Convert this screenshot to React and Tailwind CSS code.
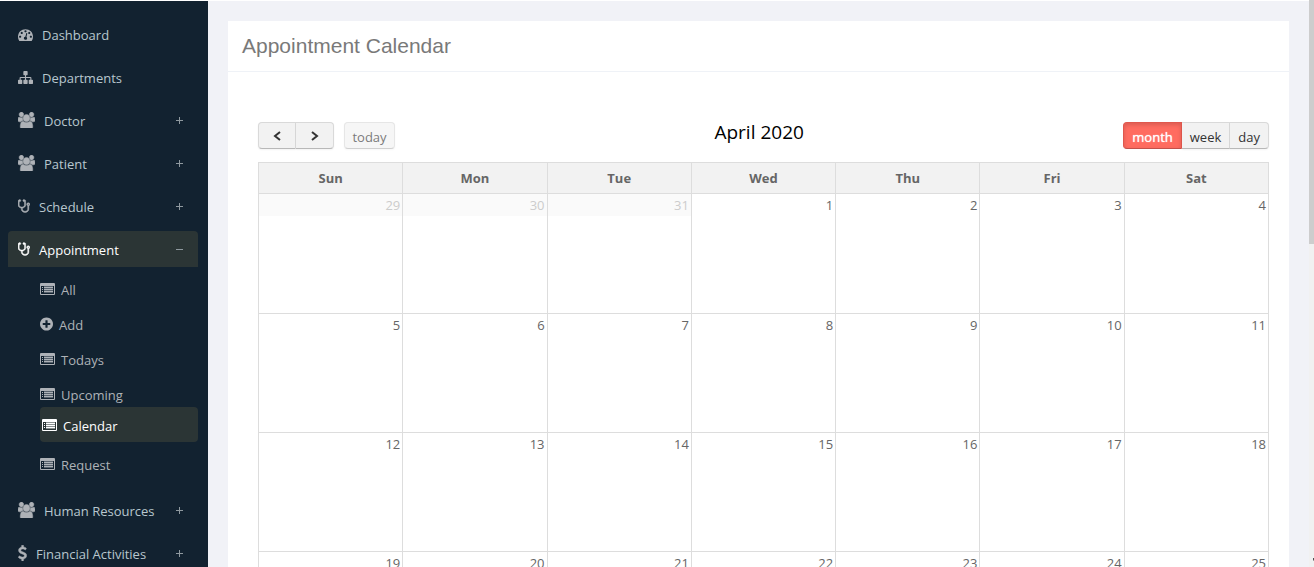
import React from 'react'

const icons = {
  dashboard: {
    viewBox: "0 0 1792 1792",
    size: "w-[15px] h-[15px]",
    path: "M384 1152q0-53-37.5-90.5t-90.5-37.5-90.5 37.5-37.5 90.5 37.5 90.5 90.5 37.5 90.5-37.5 37.5-90.5zm192-448q0-53-37.5-90.5t-90.5-37.5-90.5 37.5-37.5 90.5 37.5 90.5 90.5 37.5 90.5-37.5 37.5-90.5zm428 481l101-382q6-26-7.5-48.5t-38.5-29.5-48 6.5-30 39.5l-101 382q-60 5-107 43.5t-63 98.5q-20 77 20 146t117 89 146-20 89-117q16-60-6-117t-72-91zm660-33q0-53-37.5-90.5t-90.5-37.5-90.5 37.5-37.5 90.5 37.5 90.5 90.5 37.5 90.5-37.5 37.5-90.5zm-640-640q0-53-37.5-90.5t-90.5-37.5-90.5 37.5-37.5 90.5 37.5 90.5 90.5 37.5 90.5-37.5 37.5-90.5zm448 192q0-53-37.5-90.5t-90.5-37.5-90.5 37.5-37.5 90.5 37.5 90.5 90.5 37.5 90.5-37.5 37.5-90.5zm320 448q0 261-141 483-19 29-54 29h-1402q-35 0-54-29-141-221-141-483 0-182 71-348t191-286 286-191 348-71 348 71 286 191 191 286 71 348z",
  },
  sitemap: {
    viewBox: "0 0 1792 1792",
    size: "w-[15px] h-[15px]",
    path: "M1792 1248v320q0 40-28 68t-68 28h-320q-40 0-68-28t-28-68v-320q0-40 28-68t68-28h96v-192h-512v192h96q40 0 68 28t28 68v320q0 40-28 68t-68 28h-320q-40 0-68-28t-28-68v-320q0-40 28-68t68-28h96v-192h-512v192h96q40 0 68 28t28 68v320q0 40-28 68t-68 28h-320q-40 0-68-28t-28-68v-320q0-40 28-68t68-28h96v-192q0-52 38-90t90-38h512v-192h-96q-40 0-68-28t-28-68v-320q0-40 28-68t68-28h320q40 0 68 28t28 68v320q0 40-28 68t-68 28h-96v192h512q52 0 90 38t38 90v192h96q40 0 68 28t28 68z",
  },
  users: {
    viewBox: "0 0 1920 1664",
    size: "w-[17px] h-4",
    stroke: 50,
    path: "M593 896q-162 5-265 128h-134q-82 0-138-40.5t-56-118.5q0-353 124-353 6 0 43.5 21t97.5 42.5 119 21.5q67 0 133-23-5 37-5 66 0 139 81 256zm1071 637q0 120-73 189.5t-194 69.5h-874q-121 0-194-69.5t-73-189.5q0-53 3.5-103.5t14-109 26.5-108.5 43-97.5 62-81 85.5-53.5 111.5-20q10 0 43 21.5t73 48 107 48 135 21.5 135-21.5 107-48 73-48 43-21.5q61 0 111.5 20t85.5 53.5 62 81 43 97.5 26.5 108.5 14 109 3.5 103.5zm-1024-1277q0 106-75 181t-181 75-181-75-75-181 75-181 181-75 181 75 75 181zm704 384q0 159-112.5 271.5t-271.5 112.5-271.5-112.5-112.5-271.5 112.5-271.5 271.5-112.5 271.5 112.5 112.5 271.5zm576 225q0 78-56 118.5t-138 40.5h-134q-103-123-265-128 81-117 81-256 0-29-5-66 66 23 133 23 59 0 119-21.5t97.5-42.5 43.5-21q124 0 124 353zm-128-609q0 106-75 181t-181 75-181-75-75-181 75-181 181-75 181 75 75 181z",
  },
  stethoscope: {
    viewBox: "64 0 1408 1792",
    size: "w-3 h-[15px]",
    stroke: 60,
    path: "M1344 640q0-26-19-45t-45-19-45 19-19 45 19 45 45 19 45-19 19-45zm128 0q0 62-35.5 111t-92.5 70v395q0 159-131.5 271.5t-316.5 112.5-316.5-112.5-131.5-271.5v-132q-164-20-274-128t-110-252v-512q0-26 19-45t45-19q6 0 16 2 17-30 47-48t65-18q53 0 90.5 37.5t37.5 90.5-37.5 90.5-90.5 37.5q-33 0-64-18v402q0 106 94 181t226 75 226-75 94-181v-402q-31 18-64 18-53 0-90.5-37.5t-37.5-90.5 37.5-90.5 90.5-37.5q35 0 65 18t47 48q10-2 16-2 26 0 45 19t19 45v512q0 144-110 252t-274 128v132q0 106 94 181t226 75 226-75 94-181v-395q-57-21-92.5-70t-35.5-111q0-80 56-136t136-56 136 56 56 136z",
  },
  dollar: {
    viewBox: "384 0 1024 1792",
    size: "w-[9px] h-4",
    stroke: 60,
    path: "M1362 1185q0 153-99.5 263.5t-258.5 136.5v175q0 14-9 23t-23 9h-135q-13 0-22.5-9.5t-9.5-22.5v-175q-66-9-127.5-31t-101.5-44.5-74-48-46.5-37.5-17.5-18q-17-21-2-41l103-135q7-10 23-12 15-2 24 9l2 2q113 99 243 125 37 8 74 8 81 0 142.5-43t61.5-122q0-28-15-53t-33.5-42-58.5-37.5-66-32-80-32.5q-39-16-61.5-25t-61.5-26.5-62.5-31-56.5-35.5-53.5-42.5-43.5-49-35.5-58-21-66.5-8.5-78q0-138 98-242t255-134v-180q0-13 9.5-22.5t22.5-9.5h135q14 0 23 9t9 23v176q57 6 110.5 23t87 33.5 63.5 37.5 39 29 15 14q17 18 5 38l-81 146q-8 15-23 16-14 3-27-7-3-3-14.5-12t-39-26.5-58.5-32-74.5-26-85.5-11.5q-95 0-155 43t-60 111q0 26 8.5 48t29.5 41.5 39.5 33 56 31 60.5 27 70 27.5q53 20 81 31.5t76 35 75.5 42.5 62 50 53 63.5 31.5 76.5 13 94z",
  },
  list: {
    viewBox: "0 0 15 14",
    size: "w-[15px] h-[14px]",
    path: "M1 1h13a1 1 0 0 1 1 1v10a1 1 0 0 1-1 1H1a1 1 0 0 1-1-1V2a1 1 0 0 1 1-1zM1 4v8h13V4zM2 5h1v1H2zM2 7h1v1H2zM2 9h1v1H2zM4 5h9v1H4zM4 7h9v1H4zM4 9h9v1H4z",
    shade: "M4 4h9v7H4z",
  },
  plusCircle: {
    viewBox: "128 0 1536 1792",
    size: "w-[13px] h-4",
    path: "M1344 960v-128q0-26-19-45t-45-19h-256v-256q0-26-19-45t-45-19h-128q-26 0-45 19t-19 45v256h-256q-26 0-45 19t-19 45v128q0 26 19 45t45 19h256v256q0 26 19 45t45 19h128q26 0 45-19t19-45v-256h256q26 0 45-19t19-45zm320-64q0 209-103 385.5t-279.5 279.5-385.5 103-385.5-103-279.5-279.5-103-385.5 103-385.5 279.5-279.5 385.5-103 385.5 103 279.5 279.5 103 385.5z",
  },
}

const menu = [
  { label: "Dashboard", icon: "dashboard" },
  { label: "Departments", icon: "sitemap" },
  { label: "Doctor", icon: "users", expandable: true },
  { label: "Patient", icon: "users", expandable: true },
  { label: "Schedule", icon: "stethoscope", expandable: true },
  {
    label: "Appointment",
    icon: "stethoscope",
    expandable: true,
    open: true,
    children: [
      { label: "All", icon: "list" },
      { label: "Add", icon: "plusCircle" },
      { label: "Todays", icon: "list" },
      { label: "Upcoming", icon: "list" },
      { label: "Calendar", icon: "list", active: true },
      { label: "Request", icon: "list" },
    ],
  },
  { label: "Human Resources", icon: "users", expandable: true },
  { label: "Financial Activities", icon: "dollar", expandable: true },
]

const days = ["Sun", "Mon", "Tue", "Wed", "Thu", "Fri", "Sat"]

const weeks = [
  [29, 30, 31, 1, 2, 3, 4],
  [5, 6, 7, 8, 9, 10, 11],
  [12, 13, 14, 15, 16, 17, 18],
  [19, 20, 21, 22, 23, 24, 25],
]

const Icon = ({ name }) => {
  const icon = icons[name]
  return (
    <svg
      viewBox={icon.viewBox}
      className={`${icon.size} shrink-0`}
      preserveAspectRatio={name === "users" ? "none" : "xMidYMid meet"}
      fill="currentColor"
      fillRule={name === "list" ? "evenodd" : "nonzero"}
      stroke={icon.stroke ? "currentColor" : "none"}
      strokeWidth={icon.stroke}
      aria-hidden="true"
    >
      <path d={icon.path} />
      {icon.shade && <path d={icon.shade} opacity="0.45" />}
    </svg>
  )
}

const Toggle = ({ open }) => (
  <svg viewBox="0 0 7 8" className="ml-auto h-2 w-[7px] text-[#8f999f]" fill="currentColor" aria-hidden="true">
    <path d={open ? "M0 4h7v1H0z" : "M0 4h3V1h1v3h3v1H4v3H3V5H0z"} />
  </svg>
)

const Sidebar = () => (
  <nav className="w-52 shrink-0 bg-[#122230] px-2 pt-[15px] text-[13px] leading-5">
    <ul className="flex flex-col gap-[7px] pr-[2px]">
      {menu.map((item) => (
        <li key={item.label}>
          <a
            href="#"
            className={`flex h-9 items-center gap-[9px] rounded-t pr-[15px] pl-[10px] ${item.open ? "bg-[#2b3535] text-white" : "text-[#aeb2b7]"}`}
          >
            <Icon name={item.icon} />
            <span className={`pt-[2px] ${item.open ? "text-white" : "text-[#b8c7ce]"}`}>{item.label}</span>
            {item.expandable && <Toggle open={item.open} />}
          </a>
          {item.children && (
            <ul className="pb-2 pl-8">
              {item.children.map((child) => (
                <li key={child.label}>
                  <a
                    href="#"
                    className={`flex h-[35px] items-start gap-[6px] ${child.active ? "rounded bg-[#2b3535] pt-[9px] pl-[2px] text-white" : "pt-[13px] text-[#aeb2b7]"}`}
                  >
                    <span className="flex h-[18px] items-center"><Icon name={child.icon} /></span>
                    {child.label}
                  </a>
                </li>
              ))}
            </ul>
          )}
        </li>
      ))}
    </ul>
  </nav>
)

const Chevron = ({ d }) => (
  <svg viewBox="0 0 8 10" className="h-[10px] w-2" fill="none" stroke="#333" strokeWidth="2" aria-hidden="true">
    <path d={d} />
  </svg>
)

const button = "flex h-[27px] items-center justify-center border border-[#d9d9d9] border-b-[#b8b8b8] bg-[#f2f2f2] text-[#333] shadow-[0_1px_2px_rgba(0,0,0,0.05)]"

const Toolbar = () => (
  <div className="flex items-start justify-between pb-[13px] text-[13px] leading-5">
    <div className="flex gap-[10px]">
      <div className="flex">
        <button aria-label="previous" className={`${button} w-[38px] rounded-l`}>
          <Chevron d="M7 1L2 5l5 4" />
        </button>
        <button aria-label="next" className={`${button} w-[38px] rounded-r border-l-0`}>
          <Chevron d="M1 1l5 4-5 4" />
        </button>
      </div>
      <button disabled className={`${button} min-w-[51px] rounded pt-[2px] opacity-65`}>today</button>
    </div>
    <h2 className="text-[19px] leading-5 text-black">April 2020</h2>
    <div className="flex">
      <button className="flex h-[27px] items-center rounded-l border border-[#e0574d] border-b-[#c2514a] bg-[#ff6c60] px-2 pt-[2px] text-white shadow-[inset_0_2px_4px_rgba(0,0,0,0.15)] [text-shadow:0_0_1px_#fff]">month</button>
      <button className={`${button} border-l-0 px-2 pt-[2px]`}>week</button>
      <button className={`${button} rounded-r border-l-0 px-2 pt-[2px]`}>day</button>
    </div>
  </div>
)

const Calendar = () => (
  <table className="w-full table-fixed border-collapse text-[13px] leading-5 text-[#666]">
    <thead>
      <tr className="h-[31px] bg-[#f2f2f2]">
        {days.map((day) => (
          <th key={day} className="border border-[#ddd] p-0 font-bold">{day}</th>
        ))}
      </tr>
    </thead>
    <tbody>
      {weeks.map((week, w) => (
        <tr key={w} className={w === 0 ? "h-[120px]" : "h-[119px]"}>
          {week.map((date) => {
            const otherMonth = w === 0 && date > 7
            return (
              <td key={date} className="border border-[#ddd] p-0 align-top text-right">
                <div className={`px-[2px] py-px ${otherMonth ? "bg-[#fafafa] text-[#ccc]" : ""}`}>{date}</div>
              </td>
            )
          })}
        </tr>
      ))}
    </tbody>
  </table>
)

const App = () => {
  return (
    <div className="flex h-screen overflow-hidden bg-[#f1f2f7] font-['Open_Sans',sans-serif]">
      <div className="flex min-w-0 flex-1 overflow-hidden border-t border-white">
        <Sidebar />
        <main className="min-w-0 flex-1 p-5">
          <section className="bg-white">
            <header className="border-b border-[#eff2f7] px-[14px] py-[10px]">
              <h1 className="font-['Liberation_Sans',sans-serif] text-[21px] leading-[30px] text-[#797979]">Appointment Calendar</h1>
            </header>
            <div className="px-5 pt-[50px] pb-5 pl-[30px]">
              <Toolbar />
              <Calendar />
            </div>
          </section>
        </main>
      </div>
      {/* page scroll track */}
      <div className="flex w-[5px] shrink-0 flex-col justify-between bg-[#f1f1f1]" aria-hidden="true">
        <div className="h-[43%] bg-[#cdcdcd]" />
        <svg viewBox="0 0 5 12" className="h-3 w-[5px]" fill="#505050">
          <path d="M4 3h1v3L4 5z" />
        </svg>
      </div>
    </div>
  )
}

export default App
